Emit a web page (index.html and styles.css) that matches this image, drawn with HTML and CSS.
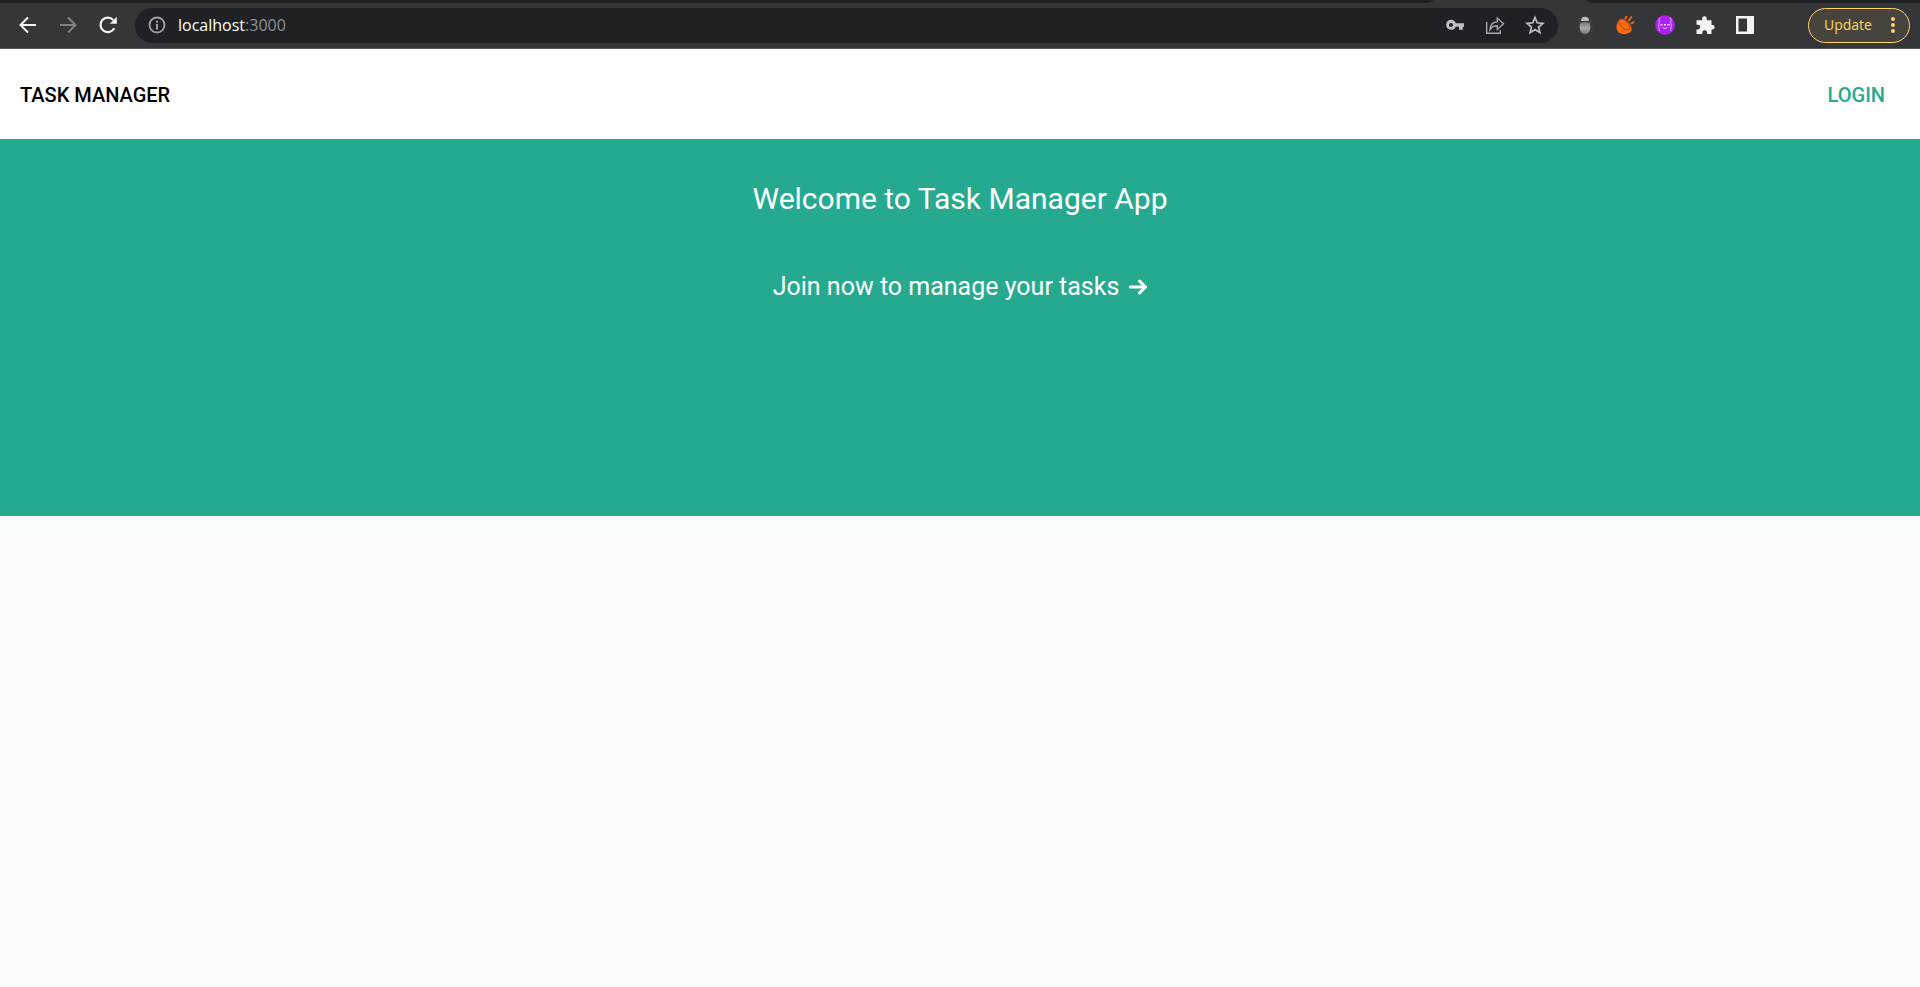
FILE: index.html
```html
<!DOCTYPE html>
<html lang="en">
<head>
<meta charset="utf-8">
<title>Task Manager</title>
<link rel="stylesheet" href="styles.css">
</head>
<body>
<div class="browser">
  <div class="tabstrip"><span class="tab tab-left"></span><span class="tab tab-right"></span></div>
  <div class="toolbar">
    <div class="nav">
      <button class="icon-button" aria-label="Back"><svg width="20" height="20" viewBox="0 0 20 20" fill="none" stroke="#f1f3f4" stroke-width="2"><path d="M18 10H3M10 2.500L2.500 10l7.500 7.500"/></svg></button>
      <button class="icon-button" aria-label="Forward"><svg width="20" height="20" viewBox="0 0 20 20" fill="none" stroke="#818285" stroke-width="2"><path d="M2 10h15M10 2.500l7.500 7.500-7.500 7.500"/></svg></button>
      <button class="icon-button" aria-label="Reload"><svg width="20" height="20" viewBox="0 0 20 20"><path d="M16.300 13.200A7.300 7.300 0 1 1 15.200 4.900" fill="none" stroke="#f1f3f4" stroke-width="2.200"/><path d="M18.800 1.700v7h-7z" fill="#f1f3f4"/></svg></button>
    </div>
    <div class="address">
      <button class="small-button" aria-label="Site information"><svg width="18" height="18" viewBox="0 0 18 18"><circle cx="9" cy="9" r="7.500" fill="none" stroke="#9aa0a6" stroke-width="1.900"/><path d="M8 4.800h2v2H8zM8 8h2v5.500H8z" fill="#9aa0a6"/></svg></button>
      <span class="url">localhost<span class="port">:3000</span></span>
      <div class="address-actions">
        <button class="small-button" aria-label="Passwords"><svg width="20" height="20" viewBox="0 0 20 20"><path fill="#bdc1c6" fill-rule="evenodd" d="M6 4.800a5 5 0 0 1 4.800 3.500H19v3.500h-1.200v3H14v-3h-3.200A5 5 0 1 1 6 4.800zM6 8a2 2 0 1 0 0 4 2 2 0 0 0 0-4z"/></svg></button>
        <button class="small-button" aria-label="Share"><svg width="20" height="20" viewBox="0 0 20 20" fill="none" stroke="#a5a8ac" stroke-width="1.400"><path d="M1.700 7v11.300h13.600V15M5 14.500c.3-4.700 2.700-7.500 7.300-7.800V3l6.200 5.800-6.200 5.700v-3.700c-3.400-.1-5.600 1.200-7.300 3.700z"/></svg></button>
        <button class="small-button" aria-label="Bookmark"><svg width="20" height="20" viewBox="0 0 20 20" fill="none" stroke="#bdc1c6" stroke-width="1.700"><path d="M10 2.500l2.200 5.300 5.700.5-4.300 3.700 1.300 5.600-4.900-3-4.900 3 1.300-5.600L2.100 8.300l5.700-.5z"/></svg></button>
      </div>
    </div>
    <div class="extensions">
      <button class="small-button" aria-label="Bug extension"><svg width="20" height="20" viewBox="0 0 20 20"><defs><linearGradient id="bug" x2="0" y2="1"><stop stop-color="#777"/><stop offset=".5" stop-color="#a8a8a8"/><stop offset="1" stop-color="#777"/></linearGradient></defs><path d="M3 5l2 3h2M17 5l-2 3h-2M2 12h4M14 12h4M3 17l3-3M17 17l-3-3" stroke="#4c4d51" fill="none"/><path d="M6 6a4 4.200 0 0 1 8 0z" fill="#bbb"/><path d="M4.800 8.500q5.200-3 10.400 0v4.500c0 3-2 6-5.200 6s-5.200-3-5.200-6z" fill="url(#bug)"/></svg></button>
      <button class="small-button" aria-label="Orange extension"><svg width="20" height="20" viewBox="0 0 20 20"><path d="M4.500 4.800C.5 8-.5 19 8 19c5 0 8-1 8.500-4.500C17 9 9 1.500 4.500 4.800z" fill="#ff6a0b"/><ellipse cx="9.300" cy="9.500" rx="7" ry="3.600" transform="rotate(43 9.300 9.500)" fill="#ff6a0b" stroke="#8a4923" stroke-width=".8"/><path d="M10.300 4.300l1.200-3.300M13.500 6l3.300-4.500M15.800 8.800l3.500-2" stroke="#ff6a0b" stroke-width="1.800"/></svg></button>
      <button class="small-button" aria-label="Purple extension"><svg width="20" height="20" viewBox="0 0 20 20"><circle cx="10" cy="10" r="9.800" fill="#ad20ef"/><path d="M5 2.500C3 5 5 7 4 9s1 5 0 7M15 2.500c2 2.500 0 4.500 1 6.500s-1 5 0 7M7.500 12.500q2.500 2 5 0" fill="none" stroke="#dfb0f5"/><path d="M5.500 9h2v1.500h-2zM9 9h2v1.500H9zM12.500 9h2v1.500h-2z" fill="#f4e4fa"/></svg></button>
      <button class="small-button" aria-label="Extensions"><svg width="20" height="20" viewBox="0 0 20 20"><path d="M1.500 5.200h5.700V3.500a2.300 2.300 0 0 1 4.600 0v1.700h4.700v4.700h.9a2.300 2.300 0 0 1 0 4.600h-.9V19h-4.400v-1.300a2.400 2.400 0 0 0-4.800 0V19H1.500v-4.500h1.300a2.400 2.400 0 0 0 0-4.800H1.500z" fill="#f1f3f4"/></svg></button>
      <button class="small-button" aria-label="Side panel"><svg width="20" height="20" viewBox="0 0 20 20"><path fill="#f1f3f4" fill-rule="evenodd" d="M1 1h18v18H1zM3.500 3.500v13H12v-13z"/></svg></button>
    </div>
    <button class="update">Update<svg width="4" height="16" viewBox="0 0 4 16" fill="#fdd663"><circle cx="2" cy="2" r="2"/><circle cx="2" cy="8" r="2"/><circle cx="2" cy="14" r="2"/></svg></button>
  </div>
</div>
<header class="header">
  <a class="brand" href="#">Task Manager</a>
  <a class="login" href="#">Login</a>
</header>
<main class="hero">
  <h1 class="title">Welcome to Task Manager App</h1>
  <a class="join" href="#">Join now to manage your tasks <svg width="18" height="16" viewBox="0 0 18 16" fill="none" stroke="#fff" stroke-width="3" stroke-linecap="round" stroke-linejoin="round"><path d="M1.500 8h15M10.500 2l6 6-6 6"/></svg></a>
</main>
</body>
</html>
```
FILE: styles.css
```css
* { box-sizing: border-box; }
body { margin: 0; background: #f9fafc; font-family: Roboto, sans-serif; }
a { text-decoration: none; }
button { border: 0; padding: 0; background: none; font: inherit; }
svg { display: block; }

.browser { background: #35363a; border-bottom: 1px solid #5a5a5e; }
.tabstrip { display: flex; justify-content: space-between; height: 3px; }
.tab { background: #202124; }
.tab-left { flex: 0 0 1433px; max-width: 75%; border-bottom-right-radius: 8px 3px; }
.tab-right { flex: 0 0 333px; border-bottom-left-radius: 8px 3px; }
.toolbar { display: flex; align-items: center; height: 45px; padding: 0 10px 1px 18px; }
.nav { display: flex; gap: 20px; }
.icon-button, .small-button { display: flex; align-items: center; justify-content: center; width: 20px; height: 20px; }
.address { display: flex; flex: 1; align-items: center; height: 35px; margin-left: 17px; padding: 0 13px 0 12px; border-radius: 18px; background: #202124; }
.url { flex: 1; margin-left: 11px; color: #fff; font: 16px/24px "Open Sans", sans-serif; }
.port { color: #8e9195; }
.address-actions, .extensions { display: flex; gap: 20px; }
.extensions { margin: 0 53px 0 17px; }
.update { display: flex; align-items: center; justify-content: space-between; width: 102px; height: 35px; padding: 0 14px 0 15px; border: 1px solid #fdd663; border-radius: 18px; background: #47443d; color: #fdd663; font: 14px/20px "Open Sans", sans-serif; }

.header { display: flex; align-items: center; justify-content: space-between; height: 90px; padding: 1px 35px 0 20px; background: #fff; font-size: 20px; font-weight: 500; line-height: 28px; text-transform: uppercase; }
.brand { color: #000; }
.login { color: #25aa90; }
.hero { display: flex; flex-direction: column; align-items: center; gap: 53px; min-height: 377px; padding: 41px 20px; background: #25aa90; color: #fff; }
.title { margin: 0; font-size: 30px; font-weight: 400; line-height: 38px; }
.join { display: flex; align-items: center; gap: 10px; color: #fff; font-size: 25px; line-height: 32px; }
```
